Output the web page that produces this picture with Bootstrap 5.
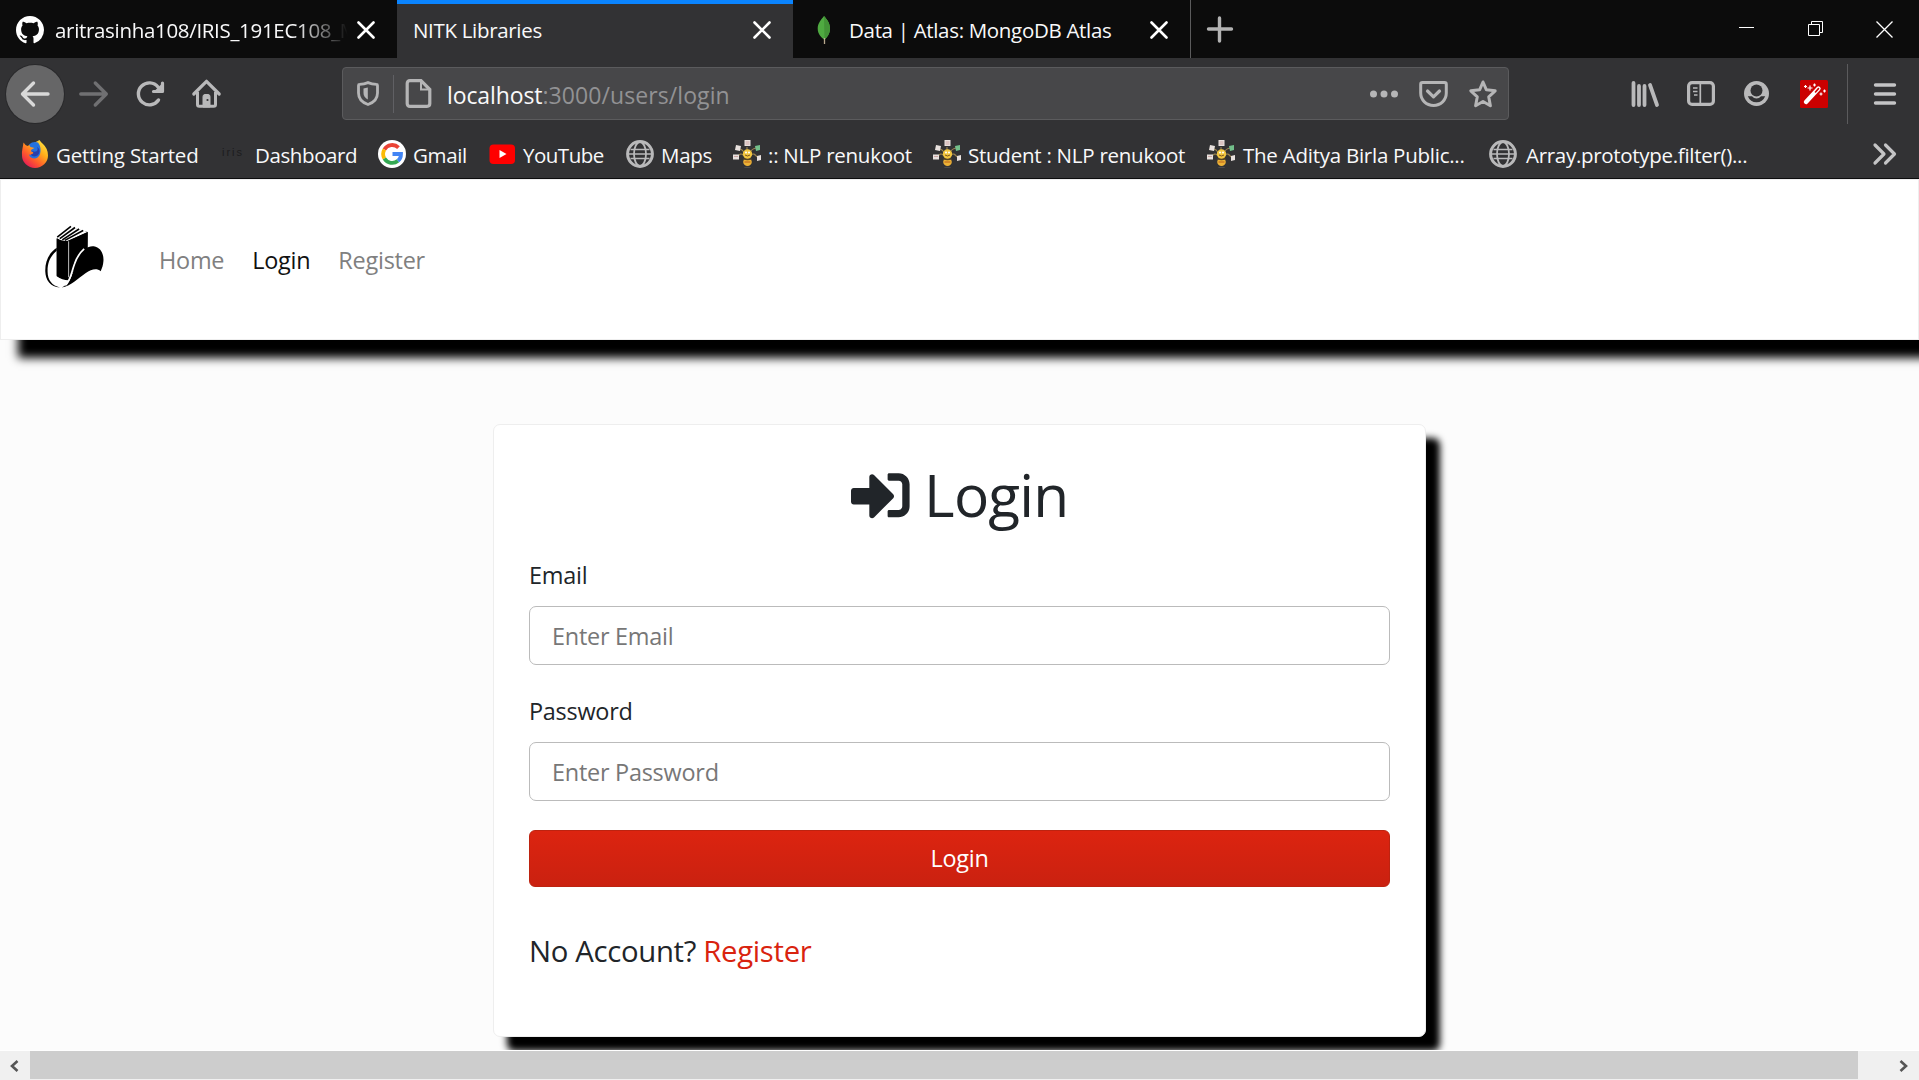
<!DOCTYPE html>
<html lang="en">
<head>
<meta charset="utf-8">
<title>NITK Libraries</title>
<link rel="stylesheet" href="https://cdn.jsdelivr.net/npm/bootstrap@5.3.0/dist/css/bootstrap.min.css">
<style>
  html, body { height: 100%; overflow: hidden; }
  body { font-family: "Open Sans", sans-serif; font-size: 23.44px; color: #212529; background: #fcfcfc; }
  svg { display: block; flex: none; overflow: visible; }

  /* browser chrome */
  .chrome-ui { font-family: "Open Sans", sans-serif; font-size: 20.5px; color: #f9f9fa; white-space: nowrap; }
  .tabstrip { height: 58px; background: #0c0c0c; }
  .tab-item { width: 397px; height: 58px; padding: 2px 22px 0 16px; }
  .tab-item.is-active { width: 396px; background: #323234; border-top: 4px solid #0a84ff; padding-top: 0; padding-bottom: 2px; }
  .tab-item:nth-child(3) { border-right: 1px solid #5b5b5c; width: 398px; padding-left: 17px; }
  .tab-title { line-height: 30px; letter-spacing: -.32px; }
  .tab-item .gap-title { margin-left: 11px; }
  .fade-title { width: 293px; -webkit-mask-image: linear-gradient(90deg, #000 240px, transparent 293px); mask-image: linear-gradient(90deg, #000 240px, transparent 293px); }
  .win-controls { gap: 53px; padding-right: 26px; }
  .toolbar { height: 71px; background: #323234; color: #b9b9ba; }
  .back-btn { width: 58px; height: 58px; margin-left: 6px; background: #666667; box-shadow: 0 0 0 1px #29292b; }
  .ico-reload { margin-left: 28px; }
  .ico-home { margin-left: 27px; }
  .url-bar { width: 1167px; height: 53px; margin-left: 121px; background: #474749; border: 1px solid #5b5b5d; border-radius: 4px; color: #b5b5b6; }
  .ico-shield { margin-left: 14px; }
  .url-actions { gap: 21px; padding-right: 11px; }
  .url-sep { width: 1px; height: 38px; background: #606064; margin: 0 11px 0 14px; }
  .url-text { font-size: 23px; line-height: 32px; padding-top: 3px; color: #929294; letter-spacing: .08px; }
  .url-text span { color: #f9f9fa; letter-spacing: -.1px; }
  .tool-icons { gap: 28px; padding-right: 23px; }
  .ico-account { margin: 0 3px 0 1px; }
  .tool-sep { width: 1px; height: 60px; background: #5b5b5d; margin: 0 -2px 0 -9px; }
  .bookmarks { height: 50px; background: #323234; border-bottom: 1px solid #0c0c0d; padding-left: 21px; }
  .bm { gap: 7px; height: 48px; letter-spacing: -.25px; }
  .bm span { line-height: 30px; padding-top: 2px; }
  .bm:nth-child(1) { width: 198px; letter-spacing: -.16px; }
  .bm:nth-child(2) { width: 159px; letter-spacing: -.4px; gap: 8px; }
  .bm:nth-child(3) { width: 109px; letter-spacing: -.36px; }
  .bm:nth-child(4) { width: 139px; letter-spacing: -.5px; gap: 8px; }
  .bm:nth-child(5) { width: 107px; }
  .bm:nth-child(6) { width: 200px; }
  .bm:nth-child(7) { width: 274px; }
  .bm:nth-child(8) { width: 282px; gap: 8px; }
  .bm:nth-child(9) { width: 384px; letter-spacing: -.3px; gap: 9px; }
  .bm .iris-mark { width: 28px; font: 11px "Liberation Sans", sans-serif; letter-spacing: 2px; color: #1c1c1e; padding: 0 0 0 3px; margin-bottom: 3px; }

  /* page */
  .page-view { height: 871px; overflow: hidden; background: #fcfcfc; letter-spacing: -.25px; }
  .site-nav { height: 161px; background: #fff; border: 1px solid #eee; box-shadow: 18px 18px 9px #000; padding: 0 0 0 40px; }
  .site-nav .navbar-nav .nav-link { padding: 0 14px; color: #808080; line-height: 36px; }
  .site-nav .navbar-nav .nav-link.active { color: #111; }
  .logo-link { margin: 0 37px 0 0; padding: 5px 0 0; }
  .login-card { width: 933px; height: 613px; margin: 84px 0 0 493px; padding: 34px 35px 0; background: #fff; border: 1px solid #eee; border-radius: 7px; box-shadow: 14px 14px 7px #000; }
  .login-title { font-size: 58.6px; line-height: 70px; margin-bottom: 29px; font-weight: 400; gap: 15px; letter-spacing: -.8px; }
  .login-title svg { margin-top: 2px; }
  .login-card .form-label { line-height: 35px; margin: 0 0 13px; display: block; }
  .login-card .form-control { height: 59px; font-size: 23.44px; padding: 0 22px; border: 1px solid #bbb; border-radius: 7px; margin-bottom: 29px; letter-spacing: -.25px; }
  .login-card .form-control::placeholder { color: #777; opacity: 1; }
  .btn-login { height: 57px; font-size: 23.44px; padding: 0; color: #fff; border: 1px solid #bd2310; border-radius: 6px; background: linear-gradient(#dc2410, #ca2110); letter-spacing: -.25px; }
  .btn-login:hover { color: #fff; }
  .register-line { font-size: 29.3px; line-height: 44px; margin: 42px 0 0; font-weight: 400; letter-spacing: -.32px; }
  .register-line a { color: #d9230f; text-decoration: none; }

  .scroll-strip { height: 30px; background: #f0f0f0; border-top: 1px solid #fff; }
  .scroll-thumb { width: 1828px; height: 28px; background: #cdcdcd; }
  .scroll-arrow { width: 30px; height: 28px; padding-top: 1px; }
  .scroll-arrow:first-child { padding-right: 2px; }
</style>
<script src="https://cdn.jsdelivr.net/npm/bootstrap@5.3.0/dist/js/bootstrap.bundle.min.js"></script>
</head>
<body>
<svg width="0" height="0" class="position-absolute">
  <defs>
    <symbol id="i-close" viewBox="0 0 18 18"><path d="M1.5 1.5l15 15M16.5 1.5l-15 15" stroke="#fff" stroke-width="2.6" stroke-linecap="round"/></symbol>
    <symbol id="i-globe" viewBox="0 0 28 28"><g fill="none" stroke="#b9b9ba"><circle cx="14" cy="14" r="12.4" stroke-width="3"/><ellipse cx="14" cy="14" rx="6" ry="12" stroke-width="1.8"/><path d="M2 14h24M4.500 9.500h19M4.500 18.500h19" stroke-width="1.5"/></g></symbol>
    <symbol id="i-bee" viewBox="0 0 28 28">
      <g fill="none" stroke="#9a8350" stroke-width="1.1"><path d="M14 14V7M11 13C10 10 9 9 6 9M17 13c1-3 2-4 6-5M10 15c-2-2-3-1-6 2M18 15c2-2 4-1 6 2"/></g>
      <g fill="#e8e1de"><path d="M11.500 0h6v6h-6zM3 5l5 1-1 5-5-1zM0 14.500h6v5H0zM24 16l4-1v5l-4 1z"/></g>
      <path d="M22 6l5-1v5l-4 1z" fill="#73c08b"/><path d="M12.500 2h4M12.500 4h4M1 16.500h4" stroke="#cda6a4"/>
      <ellipse cx="14.500" cy="22" rx="4.300" ry="4" fill="#edb236"/><circle cx="14.500" cy="14" r="4.700" fill="#f3c63f"/>
      <path d="M10.500 18.700q4 1.500 8 0" stroke="#554525" stroke-width="1.500" fill="none"/><path d="M11.500 22h6" stroke="#c26e20" stroke-width="1.200"/>
      <circle cx="13" cy="12.500" r="1" fill="#fff"/><circle cx="16" cy="12.500" r="1" fill="#fff"/><path d="M12 15q2.500 2 5 0" stroke="#7b5520" fill="none"/>
      <ellipse cx="14.500" cy="27.500" rx="3.500" ry=".7" fill="#4b4b4b"/>
    </symbol>
  </defs>
</svg>

<header class="chrome-ui">
  <div class="tabstrip d-flex">
    <div class="tab-item d-flex align-items-center">
      <svg width="28" height="28" viewBox="0 0 16 16"><path fill="#fff" fill-rule="evenodd" d="M8 0C3.580 0 0 3.580 0 8c0 3.540 2.290 6.530 5.470 7.590.4.070.55-.17.55-.38 0-.19-.01-.82-.01-1.490-2.010.37-2.530-.49-2.690-.94-.09-.23-.48-.94-.82-1.130-.28-.15-.68-.52-.01-.53.63-.01 1.080.58 1.230.82.72 1.210 1.870.87 2.330.66.07-.52.28-.87.51-1.070-1.780-.2-3.640-.89-3.640-3.950 0-.87.31-1.590.82-2.150-.08-.2-.36-1.020.08-2.120 0 0 .67-.21 2.200.82.64-.18 1.320-.27 2-.27s1.360.09 2 .27c1.530-1.040 2.200-.82 2.200-.82.44 1.100.16 1.920.08 2.120.51.56.82 1.270.82 2.150 0 3.070-1.870 3.750-3.650 3.950.29.25.54.73.54 1.480 0 1.070-.01 1.930-.01 2.200 0 .21.15.46.55.38A8.010 8.010 0 0 0 16 8c0-4.420-3.580-8-8-8z"/></svg>
      <div class="tab-title fade-title gap-title">aritrasinha108/IRIS_191EC108_M</div>
      <svg class="ms-auto" width="18" height="18"><use href="#i-close"/></svg>
    </div>
    <div class="tab-item is-active d-flex align-items-center">
      <div class="tab-title">NITK Libraries</div>
      <svg class="ms-auto" width="18" height="18"><use href="#i-close"/></svg>
    </div>
    <div class="tab-item d-flex align-items-center">
      <svg width="28" height="28" viewBox="0 0 28 28"><path d="M14 0c3 3.500 6 7 6 12.500S17 21 14.500 24C11 21 7.700 18 7.700 12.500S11 4 14 0z" fill="#4faa41"/><path d="M14 0c3 3.500 6 7 6 12.500S17 21 14.500 24z" fill="#439337"/><path d="M14.500 22v6" stroke="#b9a98e" stroke-width="1.300"/></svg>
      <div class="tab-title gap-title">Data | Atlas: MongoDB Atlas</div>
      <svg class="ms-auto" width="18" height="18"><use href="#i-close"/></svg>
    </div>
    <div class="d-flex align-items-center ps-3"><svg width="26" height="26"><path d="M12.500 2v23M1.500 13h23" stroke="#b3b3b3" stroke-width="3.400" stroke-linecap="round"/></svg></div>
    <div class="win-controls d-flex align-items-center ms-auto">
      <svg width="15" height="16"><path d="M0 6.500h15" stroke="#fff"/></svg>
      <svg width="16" height="16"><path d="M1.500 3.500h11v11h-11zM4.500 3V.5h11v11H13" fill="none" stroke="#fff"/></svg>
      <svg width="17" height="17"><path d="M.5 .5l16 16M16.500 .5l-16 16" stroke="#fff" stroke-width="1.300"/></svg>
    </div>
  </div>

  <div class="toolbar d-flex align-items-center">
    <div class="back-btn rounded-circle d-flex align-items-center justify-content-center">
      <svg width="30" height="26" viewBox="0 0 30 26"><path d="M28 13H2.500M13.500 2L2.500 13l11 11" fill="none" stroke="#d9d9d9" stroke-width="3.400" stroke-linecap="round" stroke-linejoin="round"/></svg>
    </div>
    <svg class="ms-3" width="29" height="26" viewBox="0 0 29 26"><path d="M.8 13h25.500M15.300 2l11 11-11 11" fill="none" stroke="#707072" stroke-width="3.400" stroke-linecap="round" stroke-linejoin="round"/></svg>
    <svg class="ico-reload" width="28" height="28" viewBox="0 0 28 28"><path d="M21.500 20A11 11 0 1 1 21 7" fill="none" stroke="#b9b9ba" stroke-width="3.400" stroke-linecap="round"/><path d="M25.500 3v8.500h-9" fill="none" stroke="#b9b9ba" stroke-width="3.200" stroke-linecap="round" stroke-linejoin="round"/><path d="M24.500 4v7h-7z" fill="#b9b9ba"/></svg>
    <svg class="ico-home" width="29" height="29" viewBox="0 0 29 29"><path d="M1.800 15L14.500 2.300 27.200 15" fill="none" stroke="#b9b9ba" stroke-width="3.200" stroke-linecap="round" stroke-linejoin="round"/><path d="M5.500 13v12.500q0 1.800 1.800 1.800h14.400q1.800 0 1.800-1.800V13" fill="none" stroke="#b9b9ba" stroke-width="3"/><path d="M11 28V17.500q0-2 2-2h3q2 0 2 2V28z" fill="#b9b9ba" stroke="#b9b9ba"/><circle cx="15.500" cy="21" r="1.100" fill="#323234"/></svg>

    <div class="url-bar d-flex align-items-center">
      <svg class="ico-shield" width="22" height="25" viewBox="0 0 22 25"><path d="M11 1.600c3 1.300 5.500 1.700 8.500 1.800q1 0 1 1V12c0 5.500-3.500 9.500-9.500 11.500C5 21.500 1.500 17.500 1.500 12V4.400q0-1 1-1C5.500 3.300 8 2.900 11 1.600z" fill="none" stroke="#b5b5b6" stroke-width="2.800"/><path d="M10.800 6.500v12C8 17 6.500 15 6.500 12V7.500z" fill="#b5b5b6"/></svg>
      <div class="url-sep"></div>
      <svg width="26" height="29" viewBox="0 0 26 29"><path d="M5 1.700h11L24.800 10.500V24.500q0 2.800-2.800 2.800H5q-2.800 0-2.800-2.800v-20q0-2.800 2.800-2.800z" fill="none" stroke="#b5b5b6" stroke-width="3.200"/><path d="M16 2v8.500h8.500" fill="none" stroke="#b5b5b6" stroke-width="2"/></svg>
      <div class="url-text ms-3"><span>localhost</span>:3000/users/login</div>
      <div class="url-actions d-flex align-items-center ms-auto">
        <svg width="28" height="8"><g fill="#b5b5b6"><circle cx="3.500" cy="4" r="3.500"/><circle cx="14" cy="4" r="3.500"/><circle cx="24.500" cy="4" r="3.500"/></g></svg>
        <svg width="29" height="26" viewBox="0 0 29 26"><path d="M3.500 1.600h22q1.800 0 1.800 1.800V12c0 7-5.500 12.400-12.800 12.400S1.700 19 1.700 12V3.400q0-1.800 1.800-1.800z" fill="none" stroke="#b5b5b6" stroke-width="3"/><path d="M8.500 10l6 5.800 6-5.800" fill="none" stroke="#b5b5b6" stroke-width="3.200" stroke-linecap="round" stroke-linejoin="round"/></svg>
        <svg width="28" height="28" viewBox="0 0 28 28"><path d="M14 2l3.400 7.800 8.800 1-6.500 6 1.700 9L14 21.500 6.600 25.800l1.700-9-6.500-6 8.800-1z" fill="none" stroke="#b5b5b6" stroke-width="3" stroke-linejoin="round"/></svg>
      </div>
    </div>

    <div class="tool-icons d-flex align-items-center ms-auto">
      <svg width="28" height="26" viewBox="0 0 28 26"><path d="M2.500 2v22M8 5v19M13.500 5v19M19 4l7 20" stroke="#b9b9ba" stroke-width="3.800" stroke-linecap="round"/></svg>
      <svg width="28" height="25" viewBox="0 0 28 25"><rect x="1.600" y="1.600" width="24.800" height="21.800" rx="3.500" fill="none" stroke="#b9b9ba" stroke-width="3.200"/><path d="M13.300 2v21M6 7h4.500M6 10.500h4.500M7 14h3.500" stroke="#b9b9ba" stroke-width="1.700"/></svg>
      <svg class="ico-account" width="25" height="25" viewBox="0 0 25 25"><circle cx="12.500" cy="12.500" r="12.500" fill="#b9b9ba"/><circle cx="12.500" cy="9.500" r="6" fill="#323234"/><path d="M3.800 15.200H8q1.800 2.300 4.500 2.300t4.500-2.300h4.200q-2.500 6-8.700 6t-8.700-6z" fill="#323234"/></svg>
      <svg width="28" height="28" viewBox="0 0 28 28"><rect width="28" height="28" rx="1.500" fill="#cb0000"/><path d="M6 22L18.500 8.500" stroke="#fff" stroke-width="4.400" stroke-linecap="round"/><path d="M15.500 12l3-3.400" stroke="#cb0000" stroke-width="1.600" stroke-linecap="round"/><path d="M5.500 5v3M4 6.500h3M10 5.500v5M7.500 8h5M14.500 3.500v3M13 5h3M24.500 9.500v3M23 11h3M21 12.500v3M19.500 14h3" stroke="#fff" stroke-width="1.200"/></svg>
      <div class="tool-sep"></div>
      <svg width="22" height="22"><path d="M1.500 2h19M1.500 11h19M1.500 20h19" stroke="#c4c4c5" stroke-width="3.400" stroke-linecap="round"/></svg>
    </div>
  </div>

  <div class="bookmarks d-flex align-items-center">
    <div class="bm d-flex align-items-center"><svg width="28" height="28" viewBox="0 0 28 28"><defs><linearGradient id="ff" x1="1" y1="0" x2=".2" y2="1"><stop stop-color="#fff44f"/><stop offset=".4" stop-color="#ffae1a"/><stop offset=".7" stop-color="#ff5a2c"/><stop offset="1" stop-color="#e3155b"/></linearGradient></defs><path d="M2.500 2.500q1.500 2.500 4 3.500Q9 4 12 3.500L18.500 0q1.500 2.500 3.500 4 5 4.500 5 11.500a13 12.500 0 0 1-26 0C.5 11 2 7 2.500 2.500z" fill="url(#ff)"/><path d="M8 4.500Q12 1 17 2.500q3 4 2.500 9-.5 6-5.500 7-5 0-6-4 2 1 4-.5l1.500-1.500-3.500-1 .5-2 3-1.500-4-1z" fill="#2472df"/><path d="M10 10q3 3 6 1 1.500-2 0-4 3 1.500 2.500 5-1 4-5 4.500-3 0-4-2.500 2 .5 3-1z" fill="#2b3fa8"/></svg><span>Getting Started</span></div>
    <div class="bm d-flex align-items-center"><span class="iris-mark">iris</span><span>Dashboard</span></div>
    <div class="bm d-flex align-items-center"><svg width="28" height="28" viewBox="0 0 28 28"><circle cx="14" cy="14" r="14" fill="#fff"/><g fill="none" stroke-width="3.800"><path d="M6.400 9.500A9 9 0 0 1 20.500 7.600" stroke="#ea4335"/><path d="M6.400 18.500a9 9 0 0 1 0-9" stroke="#fbbc05"/><path d="M20 20.700A9 9 0 0 1 6.400 18.500" stroke="#34a853"/><path d="M14.500 14H23q0 4.500-3 6.700" stroke="#4285f4"/></g></svg><span>Gmail</span></div>
    <div class="bm d-flex align-items-center"><svg width="28" height="28" viewBox="0 0 28 28"><rect x="2.500" y="4.500" width="25.500" height="19.500" rx="4" fill="#f00"/><path d="M12.500 10l7 4-7 4z" fill="#fff"/></svg><span>YouTube</span></div>
    <div class="bm d-flex align-items-center"><svg width="28" height="28"><use href="#i-globe"/></svg><span>Maps</span></div>
    <div class="bm d-flex align-items-center"><svg width="28" height="28"><use href="#i-bee"/></svg><span>:: NLP renukoot</span></div>
    <div class="bm d-flex align-items-center"><svg width="28" height="28"><use href="#i-bee"/></svg><span>Student : NLP renukoot</span></div>
    <div class="bm d-flex align-items-center"><svg width="28" height="28"><use href="#i-bee"/></svg><span>The Aditya Birla Public...</span></div>
    <div class="bm d-flex align-items-center"><svg width="28" height="28"><use href="#i-globe"/></svg><span>Array.prototype.filter()...</span></div>
    <svg width="24" height="22" viewBox="0 0 24 22"><path d="M2 2l9 9-9 9M12.500 2l9 9-9 9" fill="none" stroke="#c4c4c5" stroke-width="3.200" stroke-linecap="round" stroke-linejoin="round"/></svg>
  </div>
</header>

<main class="page-view">
  <nav class="site-nav navbar navbar-expand justify-content-start">
    <a class="logo-link navbar-brand" href="#">
      <svg width="67" height="76" viewBox="0 0 66 74"><path d="M15.500 14L29 2.500l17 5-.5 17Q37 30 34 40l-7 15q-6 0-11.500-4z"/><path d="M15.500 13.500Q20 17 26 16.500L46 7.500 29.500 2z" fill="#fff"/><path d="M16 12.500L29.500 2M18.500 14L33.500 3M21 15.200L37.500 4.500M23.500 15.700L41.500 6" fill="none" stroke="#000" stroke-width="1.600"/><path d="M15.500 13.500Q20 17 26.500 16L46 7.500V24L28 52.500q-6 3-12.500-2z"/><path d="M27.200 16.500V52" stroke="#bbb" stroke-width="1"/><path d="M15.500 23C8 28 4 36 4.200 46c.3 9 5 15.500 14.500 16C11 60 6.500 55 6.500 46.500 6.300 37 9.500 31 15.500 26z"/><path d="M20.500 62C28 59 30 52 33.500 41 37 29 44 20.500 52 21.500c7 1 10 8 9.500 14.500-.2 4-1.300 7-2.700 10-4-3-9-2-15 2C37 52.500 29 61 20.500 62z"/><path d="M24 60c5-4 6-13 9-21 2-6 5-11 9.500-15" fill="none" stroke="#fff" stroke-width="1.700"/></svg>
    </a>
    <div class="navbar-nav">
      <a class="nav-link" href="#">Home</a>
      <a class="nav-link active" href="#">Login</a>
      <a class="nav-link" href="#">Register</a>
    </div>
  </nav>

  <section class="login-card">
    <h1 class="login-title d-flex justify-content-center align-items-center">
      <svg width="58.600" height="58.600" viewBox="0 0 512 512"><path fill="#212529" d="M416 448h-84c-6.600 0-12-5.400-12-12v-40c0-6.600 5.400-12 12-12h84c17.700 0 32-14.300 32-32V160c0-17.700-14.300-32-32-32h-84c-6.600 0-12-5.400-12-12V76c0-6.600 5.400-12 12-12h84c53 0 96 43 96 96v192c0 53-43 96-96 96zm-47-201L201 79c-15-15-41-4.500-41 17v96H24c-13.300 0-24 10.700-24 24v96c0 13.300 10.700 24 24 24h136v96c0 21.500 26 32 41 17l168-168c9.300-9.400 9.300-24.600 0-34z"/></svg>
      <span>Login</span>
    </h1>
    <form>
      <label class="form-label" for="email">Email</label>
      <input class="form-control" id="email" type="email" placeholder="Enter Email">
      <label class="form-label" for="password">Password</label>
      <input class="form-control" id="password" type="password" placeholder="Enter Password">
      <button class="btn btn-login w-100 d-block" type="button">Login</button>
    </form>
    <p class="register-line">No Account? <a href="#">Register</a></p>
  </section>
</main>

<footer class="scroll-strip d-flex">
  <div class="scroll-arrow d-flex align-items-center justify-content-center"><svg width="10" height="12"><path d="M8.500 1L3 6l5.500 5" fill="none" stroke="#555" stroke-width="2.600"/></svg></div>
  <div class="scroll-thumb"></div>
  <div class="scroll-arrow d-flex align-items-center justify-content-center ms-auto"><svg width="10" height="12"><path d="M1.500 1L7 6l-5.500 5" fill="none" stroke="#555" stroke-width="2.600"/></svg></div>
</footer>
</body>
</html>
